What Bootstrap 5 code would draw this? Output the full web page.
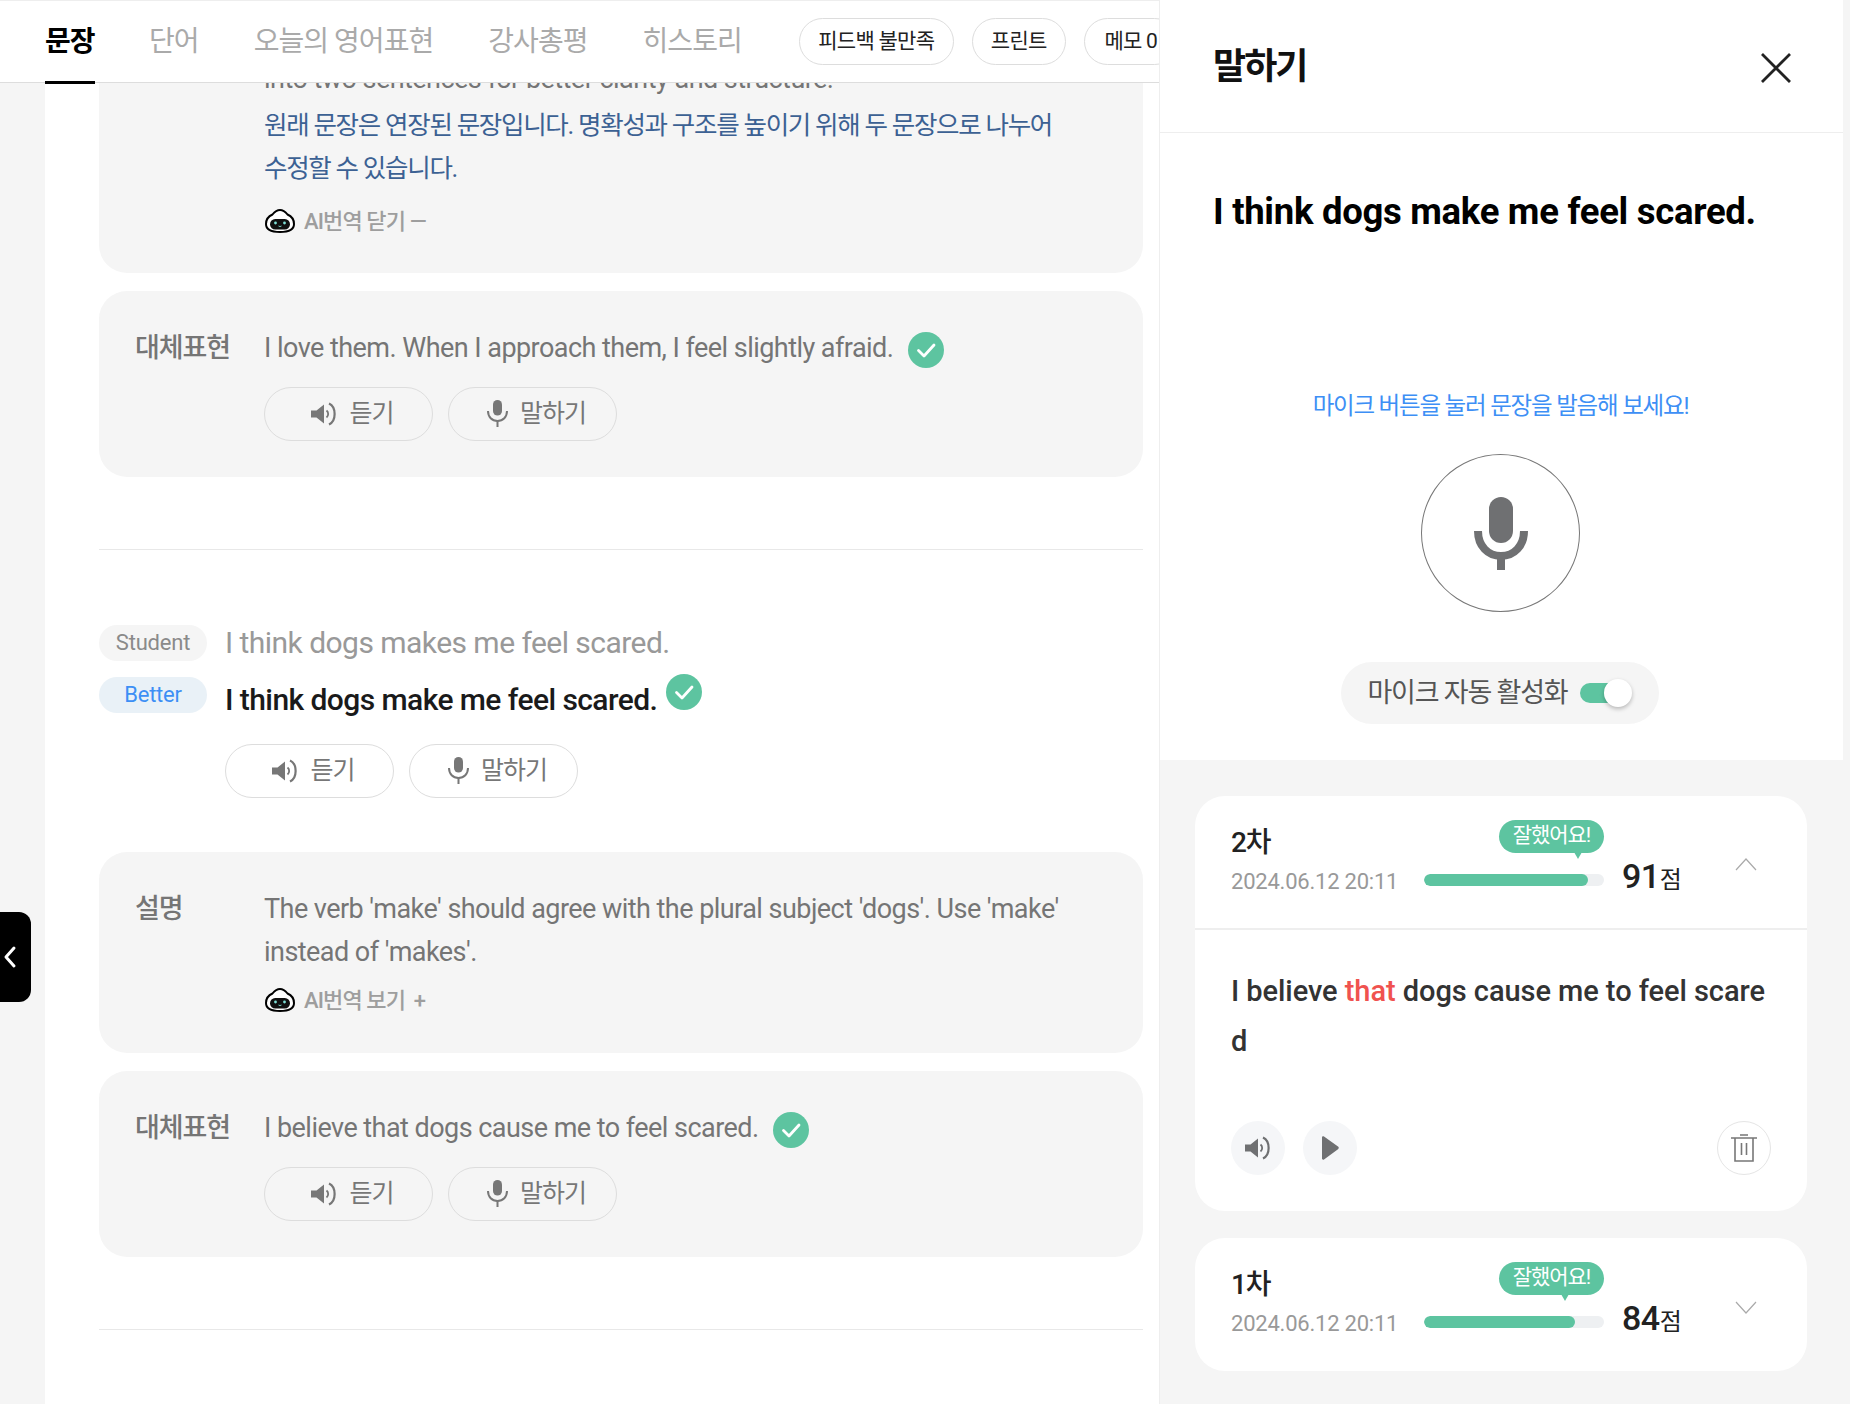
<!DOCTYPE html>
<html lang="ko"><head><meta charset="utf-8"><title>말하기</title>
<link href="https://cdn.jsdelivr.net/npm/bootstrap@5.3.0/dist/css/bootstrap.min.css" rel="stylesheet">
<style>
html,body{height:100%}
body{font-family:Roboto,"Noto Sans CJK KR",sans-serif;letter-spacing:-.03em;background:#f5f5f5;overflow:hidden;height:1404px}
.app-shell{height:1404px;width:1843px}
.left-pane{width:1159px;height:1404px;position:relative;overflow:hidden}
.top-head{height:83px;background:#fff;border-top:1px solid #eee;border-bottom:1px solid #ddd;padding-left:45px;position:relative;z-index:2}
.tab-item{font-size:28px;line-height:82px;color:#aaa;margin-right:55px;letter-spacing:-.034em;white-space:nowrap;height:81px;flex:none;text-decoration:none}
.tab-item.active{color:#000;font-weight:700;border-bottom:3px solid #000;height:83px;width:50px;margin-right:54px}
.tab-last{margin-right:57px}
.head-pill{font-size:21px;height:47px;line-height:45px;padding:0;border:1px solid #ddd;border-radius:24px;color:#222;background:#fff;flex:none;letter-spacing:-.035em;margin-top:17px;margin-right:18px}
.w-pill1{width:155px}.w-pill2{width:94px}.w-pill3{width:94px}
.left-scroll{height:1321px;margin-left:45px;background:#fff;padding:0 16px 0 54px;overflow:hidden}
.gray-box{background:#f5f5f5;border-radius:28px;padding:36px 40px 36px 37px;margin-bottom:18px;display:flex}
.box-cut{margin-top:-104px;padding-bottom:37px}
.box-exp{padding-bottom:38px}
.box-label{width:128px;flex:none;font-size:27px;line-height:40px;font-weight:500;color:#757575;letter-spacing:-.04em;padding-top:1px;margin-left:-1px;margin-right:1px}
.box-body{flex:1;min-width:0}
.line-text{font-size:27px;line-height:42.6px;color:#757575;margin:0;letter-spacing:-.02em}
.line-gap{margin-bottom:4px}
.trans-text{color:#3c6193;letter-spacing:-.05em;font-size:25.5px;word-break:keep-all}
.ai-row{display:flex;align-items:center;height:30px;margin-top:12px;font-size:22px;font-weight:500;color:#9e9e9e;gap:9px;letter-spacing:-.04em}
.ai-row svg{margin-left:1px}
.ai-row.big-gap{margin-top:17px}
.check-dot{width:36px;height:36px;flex:none;display:inline-block;vertical-align:middle}
.act-row{display:flex;gap:15px;margin-top:17px}
.act-btn{width:169px;height:54px;padding:0 0 0 8px;border:1px solid #ddd;border-radius:27px;color:#777;font-size:25px;display:flex;align-items:center;justify-content:center;gap:12px;background:transparent;letter-spacing:-.04em}
.sep-line{border:0;border-top:1px solid #e8e8e8;opacity:1;margin:0}
.sep-a{margin-top:72px;margin-bottom:75px}
.sep-b{margin-top:72px}
.sent-row{display:flex;gap:18px}
.tag-pill{width:108px;height:36px;border-radius:18px;font-size:22px;line-height:36px;text-align:center;flex:none;letter-spacing:-.01em}
.tag-st{background:#f5f5f5;color:#8a8a8a}
.tag-be{background:#e9f1f7;color:#3d8ff5}
.st-text{font-size:30px;line-height:36px;color:#999;letter-spacing:-.018em}
.be-text{font-size:30px;line-height:36px;font-weight:500;color:#1a1a1a;padding-top:5px;letter-spacing:-.019em}
.slide-tab{position:absolute;left:0;top:912px;width:31px;height:90px;background:#000;border-radius:0 12px 12px 0;z-index:3;display:flex;align-items:center;padding-left:3px}
.right-pane{width:684px;height:1404px;background:#f5f5f5;border-left:1px solid #eee}
.rp-head{height:133px;background:#fff;border-bottom:1px solid #eee;padding:0 52px 0 53px}
.rp-title{font-size:36px;font-weight:700;color:#111;letter-spacing:-.055em;line-height:50px;margin:2px 0 0}
.rp-top{background:#fff;padding:54px 55px 36px 53px;text-align:center}
.rp-sent{font-size:36.5px;line-height:50px;font-weight:700;color:#000;text-align:left;letter-spacing:-.008em;margin:0;white-space:nowrap}
.rp-hint{font-size:23.5px;line-height:34px;color:#3d8ff5;margin:152px 0 31px;letter-spacing:-.05em}
.mic-circle{width:159px;height:158px;border:1px solid #777;border-radius:50%;background:#fff;padding:0;margin:0 auto 50px;display:flex;align-items:center;justify-content:center}
.auto-pill{width:318px;height:62px;border-radius:31px;background:#f5f5f5;margin:0 auto;padding-left:27px;display:flex;align-items:center;font-size:27px;color:#555;letter-spacing:-.045em;gap:13px;position:relative;left:-1px}
.sw-track{width:40px;height:20px;background:#5dc4a0;border-radius:10px;position:relative;flex:none}
.sw-thumb{position:absolute;left:24px;top:-4px;width:28px;height:28px;background:#fff;border-radius:50%;box-shadow:0 2px 4px rgba(0,0,0,.25)}
.rp-list{padding:36px 36px 0 35px}
.try-card{background:#fff;border-radius:30px;margin-bottom:27px;overflow:hidden}
.try-head{height:133px;position:relative;display:flex;padding-left:36px}
.try-open{border-bottom:2px solid #eee;height:134px}
.try-meta{width:193px;flex:none}
.try-no{font-size:28px;line-height:36px;font-weight:500;color:#222;margin-top:29px;letter-spacing:-.04em}
.try-date{font-size:22px;line-height:30px;color:#999;margin-top:6px;letter-spacing:-.01em;white-space:nowrap}
.try-bar{width:180px;height:12px;margin-top:78px;flex:none;border-radius:6px;background:#eef0f2;overflow:hidden}
.try-fill{height:12px;background:#5dc4a0;border-radius:6px}
.good-tip{position:absolute;top:24px;left:304px;width:105px;height:33px;border-radius:17px;background:#5dc4a0;color:#fff;font-size:21px;line-height:30px;text-align:center;letter-spacing:-.05em}
.good-tip::after{content:"";position:absolute;top:32px;left:var(--tail);border-left:4px solid transparent;border-right:4px solid transparent;border-top:7px solid #5dc4a0}
.try-score{margin:59px 0 0 18px;line-height:42px;font-size:34px;font-weight:500;color:#222;white-space:nowrap;letter-spacing:-.015em}
.try-score span{font-size:24px;font-weight:400;letter-spacing:0}
.try-chev{position:absolute;top:62px;left:540px}
.try-closed{top:63px}
.try-body{padding:36px 36px 36px}
.try-text{font-size:29px;line-height:50px;font-weight:500;color:#333;word-break:break-all;margin:0;letter-spacing:-.002em}
.try-text span{color:#f0524f}
.try-acts{display:flex;gap:18px;margin-top:55px}
.round-btn{width:54px;height:54px;border-radius:50%;background:#f5f6f8;border:0;padding:0;display:flex;align-items:center;justify-content:center}
.round-trash{background:#fff;border:1px solid #e5e5e5;margin-left:auto}
</style></head>
<body>
<svg width="0" height="0" class="d-block" style="position:absolute">
<symbol id="spk" viewBox="0 0 26 24"><path d="M0 8.500h5.500L13 2.500v19l-7.500-6H0z" fill="currentColor"/><path d="M15.500 8.500a4.500 4.500 0 0 1 0 7" fill="none" stroke="currentColor" stroke-width="1.800"/><path d="M18 1.500c7.500 3.500 7.500 17.500 0 21" fill="none" stroke="currentColor" stroke-width="2.200"/></symbol>
<symbol id="mic" viewBox="0 0 54 73"><rect x="15" y="0" width="24" height="46" rx="12" fill="currentColor"/><path d="M4 34c0 15 10 25 23 25s23-10 23-25" fill="none" stroke="currentColor" stroke-width="8"/><rect x="23" y="56" width="8" height="17" fill="currentColor"/></symbol>
<symbol id="micsm" viewBox="0 0 21 27"><rect x="6" y="0" width="9" height="15.500" rx="4.500" fill="currentColor"/><path d="M1 11c0 6 4 10 9.500 10S20 17 20 11" fill="none" stroke="currentColor" stroke-width="2"/><rect x="9.500" y="20" width="2" height="7" fill="currentColor"/></symbol>
<symbol id="chk" viewBox="0 0 36 36"><circle cx="18" cy="18" r="18" fill="#5dc4a0"/><path d="M10.500 18.500l5.500 5.500 10-11" fill="none" stroke="#fff" stroke-width="2.800" stroke-linecap="round" stroke-linejoin="round"/></symbol>
<symbol id="bot" viewBox="0 0 30 24"><path d="M15 1c3.500 0 5.500 2 7.500 4.500 3.500 1.500 6.500 5 6.500 9.500 0 5.500-6 8-14 8S1 20.500 1 15c0-4.500 3-8 6.500-9.500C9.500 3 11.500 1 15 1z" fill="#fff" stroke="#000" stroke-width="2"/><rect x="5" y="10" width="20" height="10.500" rx="5.200" fill="#111"/><circle cx="10.500" cy="14" r="1.400" fill="#7fe0d6"/><circle cx="19.500" cy="14" r="1.400" fill="#7fe0d6"/><path d="M13.500 17q1.500 1.200 3 0" stroke="#7fe0d6" stroke-width=".9" fill="none"/></symbol>
</svg>
<div class="app-shell d-flex">
 <div class="left-pane">
  <div class="top-head d-flex">
   <a class="tab-item active">문장</a><a class="tab-item">단어</a><a class="tab-item">오늘의 영어표현</a><a class="tab-item">강사총평</a><a class="tab-item tab-last">히스토리</a>
   <button class="btn head-pill w-pill1">피드백 불만족</button><button class="btn head-pill w-pill2">프린트</button><button class="btn head-pill w-pill3">메모 0</button>
  </div>
  <div class="left-scroll">
   <div class="gray-box box-cut"><div class="box-label"></div><div class="box-body">
     <p class="line-text line-gap">The original sentence is a run-on sentence. It can be revised<br>into two sentences for better clarity and structure.</p>
     <p class="line-text trans-text">원래 문장은 연장된 문장입니다. 명확성과 구조를 높이기 위해 두 문장으로 나누어 수정할 수 있습니다.</p>
     <div class="ai-row big-gap"><svg width="30" height="24"><use href="#bot"/></svg><span>AI번역 닫기 —</span></div>
   </div></div>
   <div class="gray-box"><div class="box-label">대체표현</div><div class="box-body">
     <p class="line-text">I love them. When I approach them, I feel slightly afraid. <svg class="check-dot ms-2" width="36" height="36"><use href="#chk"/></svg></p>
     <div class="act-row"><button class="btn act-btn"><svg width="26" height="24"><use href="#spk"/></svg>듣기</button><button class="btn act-btn"><svg width="21" height="27"><use href="#micsm"/></svg>말하기</button></div>
   </div></div>
   <hr class="sep-line sep-a">
   <div class="sent-row mb-3"><div class="tag-pill tag-st">Student</div><div class="st-text">I think dogs makes me feel scared.</div></div>
   <div class="sent-row"><div class="tag-pill tag-be">Better</div><div class="be-text">I think dogs make me feel scared.</div><svg class="check-dot" style="margin:-3px 0 0 -9px" width="36" height="36"><use href="#chk"/></svg></div>
   <div class="act-row" style="margin:26px 0 54px 126px"><button class="btn act-btn"><svg width="26" height="24"><use href="#spk"/></svg>듣기</button><button class="btn act-btn"><svg width="21" height="27"><use href="#micsm"/></svg>말하기</button></div>
   <div class="gray-box box-exp"><div class="box-label">설명</div><div class="box-body">
     <p class="line-text">The verb 'make' should agree with the plural subject 'dogs'. Use 'make' instead of 'makes'.</p>
     <div class="ai-row"><svg width="30" height="24"><use href="#bot"/></svg><span>AI번역 보기 <span class="ms-1">+</span></span></div>
   </div></div>
   <div class="gray-box"><div class="box-label">대체표현</div><div class="box-body">
     <p class="line-text">I believe that dogs cause me to feel scared. <svg class="check-dot ms-2" width="36" height="36"><use href="#chk"/></svg></p>
     <div class="act-row"><button class="btn act-btn"><svg width="26" height="24"><use href="#spk"/></svg>듣기</button><button class="btn act-btn"><svg width="21" height="27"><use href="#micsm"/></svg>말하기</button></div>
   </div></div>
   <hr class="sep-line sep-b">
  </div>
  <div class="slide-tab"><svg width="14" height="24" viewBox="0 0 14 24"><path d="M11 3L3 12l8 9" fill="none" stroke="#fff" stroke-width="3" stroke-linecap="round" stroke-linejoin="round"/></svg></div>
 </div>
 <div class="right-pane">
  <div class="rp-head d-flex align-items-center justify-content-between">
   <h2 class="rp-title">말하기</h2>
   <svg width="30" height="30" viewBox="0 0 30 30" class="mt-1"><path d="M1 1l28 28M29 1L1 29" stroke="#222" stroke-width="2.800" fill="none"/></svg>
  </div>
  <div class="rp-top">
   <p class="rp-sent">I think dogs make me feel scared.</p>
   <p class="rp-hint">마이크 버튼을 눌러 문장을 발음해 보세요!</p>
   <button class="btn mic-circle" aria-label="mic"><svg width="54" height="73" style="color:#6f7072"><use href="#mic"/></svg></button>
   <div class="auto-pill">마이크 자동 활성화<span class="sw-track"><span class="sw-thumb"></span></span></div>
  </div>
  <div class="rp-list">
   <div class="try-card">
    <div class="try-head try-open">
     <div class="try-meta"><div class="try-no">2차</div><div class="try-date">2024.06.12 20:11</div></div>
     <div class="try-bar"><div class="try-fill" style="width:91%"></div></div>
     <div class="try-score">91<span>점</span></div>
     <div class="good-tip" style="--tail:75px">잘했어요!</div>
     <svg class="try-chev" width="22" height="13" viewBox="0 0 22 13"><path d="M1 12L11 1l10 11" fill="none" stroke="#aaa" stroke-width="1.200"/></svg>
    </div>
    <div class="try-body">
     <p class="try-text">I believe <span>that</span> dogs cause me to feel scared</p>
     <div class="try-acts">
      <button class="round-btn" style="color:#6f7072"><svg width="26" height="24"><use href="#spk"/></svg></button>
      <button class="round-btn"><svg width="18" height="24" viewBox="0 0 18 24"><path d="M1 1.500c0-1 1-1.500 2-1l14 10c1 .7 1 2 0 2.800L3 23.500c-1 .5-2 0-2-1z" fill="#6f7072"/></svg></button>
      <button class="round-btn round-trash"><svg width="26" height="28" viewBox="0 0 26 28" fill="none" stroke="#777" stroke-width="1.600"><path d="M0 4h26M9 1h8M4 4v23h18V4M10.500 9v12M15.500 9v12"/></svg></button>
     </div>
    </div>
   </div>
   <div class="try-card">
    <div class="try-head">
     <div class="try-meta"><div class="try-no">1차</div><div class="try-date">2024.06.12 20:11</div></div>
     <div class="try-bar"><div class="try-fill" style="width:84%"></div></div>
     <div class="try-score">84<span>점</span></div>
     <div class="good-tip" style="--tail:62px">잘했어요!</div>
     <svg class="try-chev try-closed" width="22" height="13" viewBox="0 0 22 13"><path d="M1 1l10 11L21 1" fill="none" stroke="#aaa" stroke-width="1.200"/></svg>
    </div>
   </div>
  </div>
 </div>
</div>
<script src="https://cdn.jsdelivr.net/npm/bootstrap@5.3.0/dist/js/bootstrap.bundle.min.js"></script>
</body></html>
